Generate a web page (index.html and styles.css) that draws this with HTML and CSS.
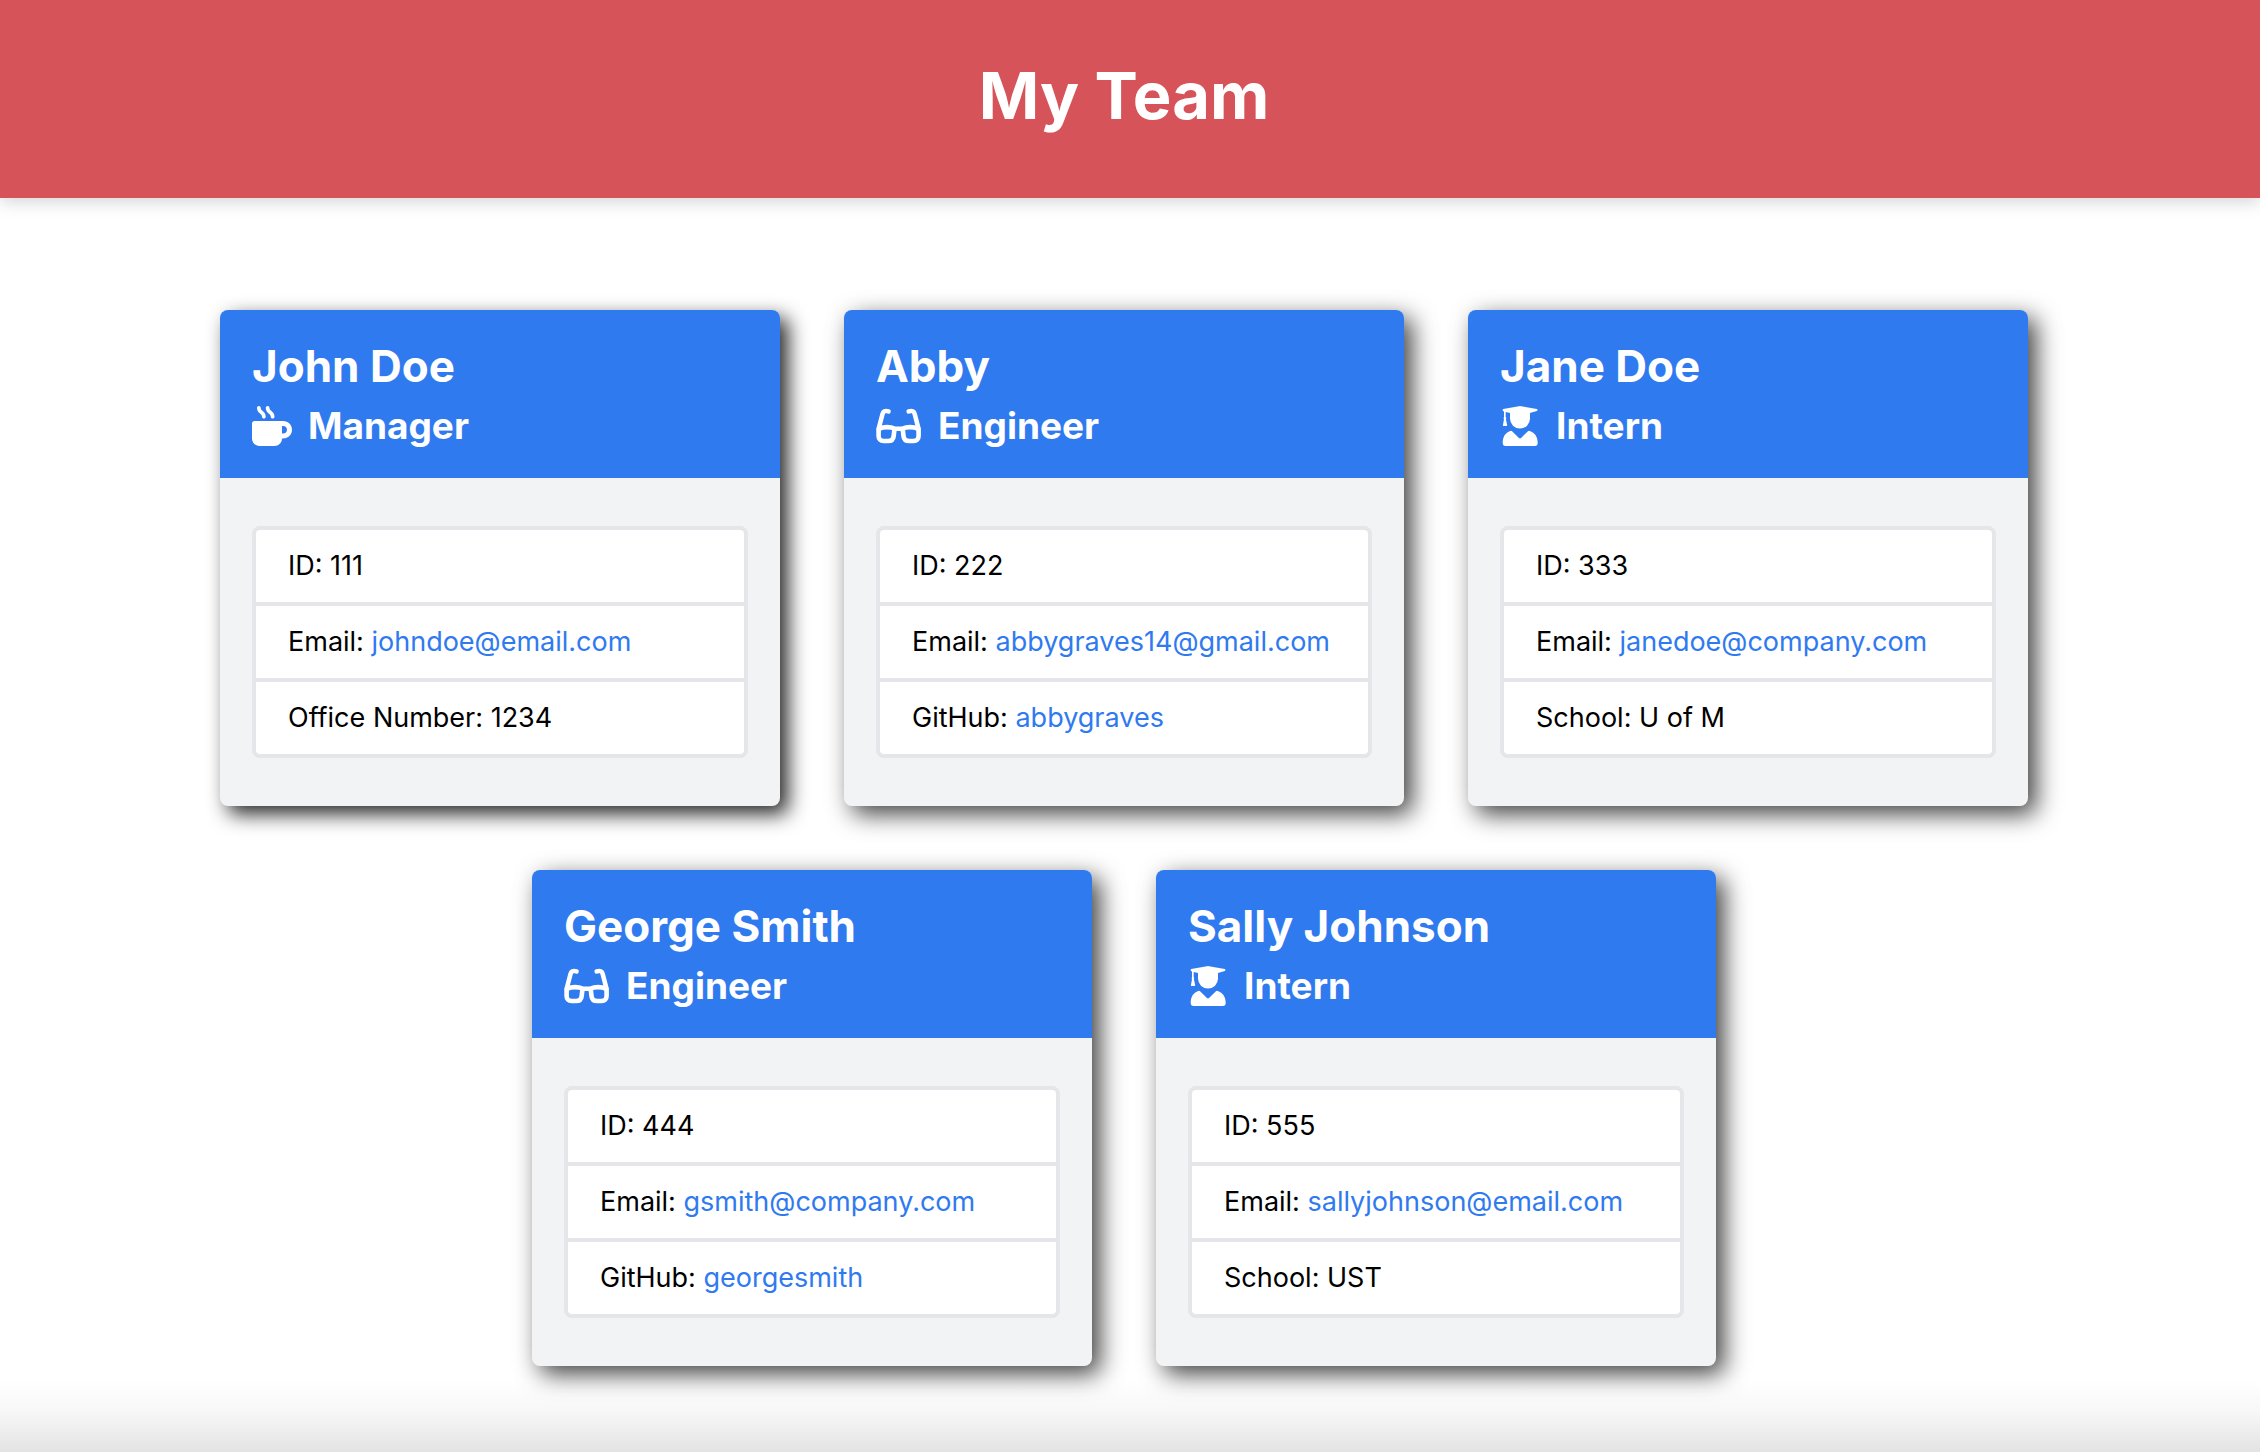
FILE: index.html
```html
<!DOCTYPE html>
<html lang="en">
<head>
<meta charset="utf-8">
<meta name="viewport" content="width=device-width, initial-scale=1">
<title>My Team</title>
<link rel="stylesheet" href="styles.css">
</head>
<body>
<svg class="sprite" aria-hidden="true">
  <symbol id="mug" viewBox="0 0 512 512">
    <path d="M88 0C74.700 0 64 10.700 64 24c0 38.900 23.400 59.400 39.100 73.100l1.100 1C120.500 112.300 128 119.900 128 136c0 13.300 10.700 24 24 24s24-10.700 24-24c0-38.900-23.400-59.400-39.100-73.100l-1.100-1C119.500 47.700 112 40.100 112 24c0-13.300-10.700-24-24-24zM32 192c-17.700 0-32 14.300-32 32V416c0 53 43 96 96 96H288c53 0 96-43 96-96h16c61.900 0 112-50.100 112-112s-50.100-112-112-112H32zm352 64h16c26.500 0 48 21.500 48 48s-21.500 48-48 48H384V256zM224 24c0-13.300-10.700-24-24-24s-24 10.700-24 24c0 38.900 23.400 59.400 39.100 73.100l1.100 1C232.500 112.300 240 119.900 240 136c0 13.300 10.700 24 24 24s24-10.700 24-24c0-38.900-23.400-59.400-39.100-73.100l-1.100-1C231.500 47.700 224 40.100 224 24z"/>
  </symbol>
  <symbol id="glasses" viewBox="0 0 46 40">
    <g fill="none" stroke="currentColor" stroke-width="4.600" stroke-linecap="round" stroke-linejoin="round">
      <path d="M12.500 5.400C9 4.200 7.200 5.400 6.500 8L2.600 23V30c0 3 2 5 5 5h4.500c3.300 0 5.300-2 5.600-5l.7-6.500"/>
      <path d="M32.700 5.400C36.200 4.200 38 5.400 38.700 8L42.600 23V30c0 3-2 5-5 5h-4.500c-3.300 0-5.300-2-5.600-5l-.7-6.500"/>
      <path d="M3 22.800C8 20.700 14 20.700 19.500 22.800H25.700C31.200 20.700 37.200 20.700 42.200 22.800"/>
    </g>
  </symbol>
  <symbol id="graduate" viewBox="0 0 40 40">
    <path d="M19 .2Q20 0 21 .2L36.800 3.100Q38.400 4 36.800 5L30 7V12.600A10 10 0 0 1 10 12.600V7L5.700 6V11.200Q6.700 12.200 5.900 13.200L7.200 19.200Q7.200 20 6.400 20H3.600Q2.800 20 2.900 19.200L4 13.200Q3.200 12.200 4 11.200V5.600Q1.700 4.500 3.200 3.100Z"/>
    <path d="M10.400 25Q11.400 24.500 12.300 25.400L19 32Q20 32.900 21 32L27.700 25.400Q28.600 24.500 29.600 25C35 26.600 37.600 31 37.700 36.700Q37.700 40 34.800 40H5.600Q2.700 40 2.700 36.700C2.800 31 5.200 26.600 10.400 25Z"/>
  </symbol>
</svg>

<header class="banner"><h1>My Team</h1></header>

<main class="team">
  <article class="card card-active">
    <div class="card-head">
      <h2>John Doe</h2>
      <h3><svg class="icon" aria-hidden="true"><use href="#mug"/></svg>Manager</h3>
    </div>
    <ul class="details">
      <li>ID: 111</li>
      <li>Email: <a href="mailto:johndoe@email.com">johndoe@email.com</a></li>
      <li>Office Number: 1234</li>
    </ul>
  </article>
  <article class="card">
    <div class="card-head">
      <h2>Abby</h2>
      <h3><svg class="icon icon-wide" aria-hidden="true"><use href="#glasses"/></svg>Engineer</h3>
    </div>
    <ul class="details">
      <li>ID: 222</li>
      <li>Email: <a href="mailto:abbygraves14@gmail.com">abbygraves14@gmail.com</a></li>
      <li>GitHub: <a href="https://github.com/abbygraves">abbygraves</a></li>
    </ul>
  </article>
  <article class="card">
    <div class="card-head">
      <h2>Jane Doe</h2>
      <h3><svg class="icon" aria-hidden="true"><use href="#graduate"/></svg>Intern</h3>
    </div>
    <ul class="details">
      <li>ID: 333</li>
      <li>Email: <a href="mailto:janedoe@company.com">janedoe@company.com</a></li>
      <li>School: U of M</li>
    </ul>
  </article>
  <article class="card">
    <div class="card-head">
      <h2>George Smith</h2>
      <h3><svg class="icon icon-wide" aria-hidden="true"><use href="#glasses"/></svg>Engineer</h3>
    </div>
    <ul class="details">
      <li>ID: 444</li>
      <li>Email: <a href="mailto:gsmith@company.com">gsmith@company.com</a></li>
      <li>GitHub: <a href="https://github.com/georgesmith">georgesmith</a></li>
    </ul>
  </article>
  <article class="card">
    <div class="card-head">
      <h2>Sally Johnson</h2>
      <h3><svg class="icon" aria-hidden="true"><use href="#graduate"/></svg>Intern</h3>
    </div>
    <ul class="details">
      <li>ID: 555</li>
      <li>Email: <a href="mailto:sallyjohnson@email.com">sallyjohnson@email.com</a></li>
      <li>School: UST</li>
    </ul>
  </article>
</main>
<footer class="page-end"></footer>
</body>
</html>
```
FILE: styles.css
```css
* {
  box-sizing: border-box;
  margin: 0;
  padding: 0;
}

body {
  min-height: 100vh;
  display: flex;
  flex-direction: column;
  background: #fff;
  color: #000;
  font-family: Inter, "Liberation Sans", sans-serif;
  font-size: 27px;
  line-height: 40px;
}

.sprite {
  display: none;
}

.banner {
  padding: 48px 12px 54px 0;
  background: #d65459;
  color: #fff;
  text-align: center;
  box-shadow: 0 4px 16px rgba(0, 0, 0, 0.17);
}

h1 {
  font-size: 65px;
  font-weight: 700;
  line-height: 96px;
}

.team {
  display: flex;
  flex-wrap: wrap;
  justify-content: center;
  gap: 64px;
  padding: 112px 162px 14px 150px;
}

.card {
  width: 560px;
  border-radius: 8px;
  background: #f2f3f5;
  box-shadow: 8px 8px 24px rgba(0, 0, 0, 0.75);
}

.card-active {
  box-shadow: 8px 8px 20px rgba(0, 0, 0, 0.85);
}

.card-head {
  padding: 26px 32px 22px;
  border-radius: 8px 8px 0 0;
  background: #307aef;
  color: #fff;
}

h2 {
  font-size: 44px;
  font-weight: 700;
  line-height: 60px;
}

h3 {
  display: flex;
  align-items: center;
  gap: 16px;
  font-size: 37px;
  font-weight: 700;
  line-height: 60px;
}

.icon {
  width: 40px;
  height: 40px;
  fill: currentColor;
}

.icon-wide {
  width: 46px;
}

.details {
  margin: 48px 32px;
  border: 4px solid #e5e6ea;
  border-radius: 8px;
  background: #fff;
  list-style: none;
}

.details li {
  padding: 16px 32px;
}

.details li + li {
  border-top: 4px solid #e5e6ea;
}

a {
  color: #307aef;
  text-decoration: none;
}

.page-end {
  flex: 1;
  background: linear-gradient(rgba(0, 0, 0, 0), rgba(0, 0, 0, 0.03) 45%, rgba(0, 0, 0, 0.11));
}
```
